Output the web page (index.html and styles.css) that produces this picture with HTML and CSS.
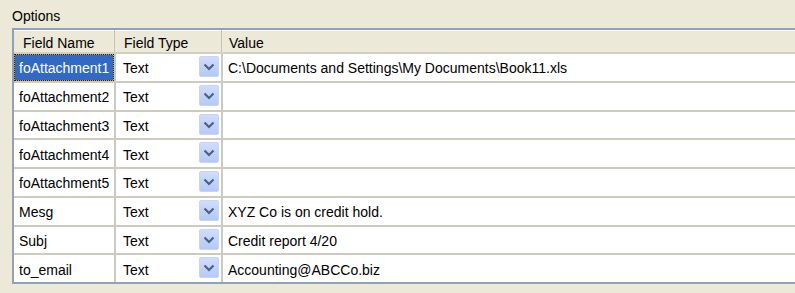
FILE: index.html
```html
<!DOCTYPE html>
<html>
<head>
<meta charset="utf-8">
<link rel="stylesheet" href="styles.css">
</head>
<body>
<div class="panel">
  <div class="title">Options</div>
  <div class="grid">
    <div class="hrow">
      <div class="hcell c1">Field Name</div>
      <div class="hcell c2">Field Type</div>
      <div class="hcell c3">Value</div>
    </div>
    <div class="row">
      <div class="cell c1 focus"><span class="sel">foAttachment1</span></div>
      <div class="cell c2"><span class="type">Text</span><span class="btn"><svg width="20" height="21" viewBox="0 0 20 21"><path d="M5.5 8.5 L10 13 L14.5 8.5" fill="none" stroke="#4d6185" stroke-width="2.2"/></svg></span></div>
      <div class="cell c3">C:\Documents and Settings\My Documents\Book11.xls</div>
    </div>
    <div class="row">
      <div class="cell c1">foAttachment2</div>
      <div class="cell c2"><span class="type">Text</span><span class="btn"><svg width="20" height="21" viewBox="0 0 20 21"><path d="M5.5 8.5 L10 13 L14.5 8.5" fill="none" stroke="#4d6185" stroke-width="2.2"/></svg></span></div>
      <div class="cell c3"></div>
    </div>
    <div class="row">
      <div class="cell c1">foAttachment3</div>
      <div class="cell c2"><span class="type">Text</span><span class="btn"><svg width="20" height="21" viewBox="0 0 20 21"><path d="M5.5 8.5 L10 13 L14.5 8.5" fill="none" stroke="#4d6185" stroke-width="2.2"/></svg></span></div>
      <div class="cell c3"></div>
    </div>
    <div class="row">
      <div class="cell c1">foAttachment4</div>
      <div class="cell c2"><span class="type">Text</span><span class="btn"><svg width="20" height="21" viewBox="0 0 20 21"><path d="M5.5 8.5 L10 13 L14.5 8.5" fill="none" stroke="#4d6185" stroke-width="2.2"/></svg></span></div>
      <div class="cell c3"></div>
    </div>
    <div class="row">
      <div class="cell c1">foAttachment5</div>
      <div class="cell c2"><span class="type">Text</span><span class="btn"><svg width="20" height="21" viewBox="0 0 20 21"><path d="M5.5 8.5 L10 13 L14.5 8.5" fill="none" stroke="#4d6185" stroke-width="2.2"/></svg></span></div>
      <div class="cell c3"></div>
    </div>
    <div class="row">
      <div class="cell c1">Mesg</div>
      <div class="cell c2"><span class="type">Text</span><span class="btn"><svg width="20" height="21" viewBox="0 0 20 21"><path d="M5.5 8.5 L10 13 L14.5 8.5" fill="none" stroke="#4d6185" stroke-width="2.2"/></svg></span></div>
      <div class="cell c3">XYZ Co is on credit hold.</div>
    </div>
    <div class="row">
      <div class="cell c1">Subj</div>
      <div class="cell c2"><span class="type">Text</span><span class="btn"><svg width="20" height="21" viewBox="0 0 20 21"><path d="M5.5 8.5 L10 13 L14.5 8.5" fill="none" stroke="#4d6185" stroke-width="2.2"/></svg></span></div>
      <div class="cell c3">Credit report 4/20</div>
    </div>
    <div class="row last">
      <div class="cell c1">to_email</div>
      <div class="cell c2"><span class="type">Text</span><span class="btn"><svg width="20" height="21" viewBox="0 0 20 21"><path d="M5.5 8.5 L10 13 L14.5 8.5" fill="none" stroke="#4d6185" stroke-width="2.2"/></svg></span></div>
      <div class="cell c3">Accounting@ABCCo.biz</div>
    </div>
  </div>
</div>
</body>
</html>
```

FILE: styles.css
```css
html, body {
  margin: 0;
  padding: 0;
  background: #ece9d8;
  overflow: hidden;
}
body {
  width: 795px;
  height: 293px;
  font-family: "Liberation Sans", Arial, sans-serif;
  font-size: 14px;
  color: #000;
}
.panel {
  padding: 8px 0 0 12px;
}
.title {
  line-height: 16px;
  height: 16px;
  margin-bottom: 4px;
}
.grid {
  width: 800px;
  border: 2px solid #8ea3ba;
  border-right: none;
  background: #fff;
}
.hrow {
  display: flex;
  height: 22px;
  background: #ece9d8;
  border-bottom: 2px solid #d3d0c0;
  box-shadow: inset 0 1px 0 #fff;
}
.hcell {
  box-sizing: border-box;
  line-height: 16px;
  padding-top: 5px;
}
.hcell.c1, .hcell.c2 {
  border-right: 1px solid #c7c4b3;
}
.hcell.c1 { width: 101px; padding-left: 9px; }
.hcell.c2 { width: 107px; padding-left: 9px; }
.hcell.c3 { flex: 1; padding-left: 7px; }
.row {
  display: flex;
  height: 28.75px;
  box-sizing: border-box;
  border-bottom: 2px solid #cdcabe;
}
.row.last {
  border-bottom: none;
  height: 27px;
}
.cell {
  box-sizing: border-box;
  display: flex;
  align-items: center;
  line-height: 16px;
  white-space: nowrap;
  padding-top: 2px;
}
.cell.c1 {
  width: 102px;
  padding-left: 5px;
  border-right: 2px solid #cdcabe;
}
.cell.c2 {
  width: 107px;
  padding-left: 7px;
  padding-top: 0;
  border-right: 2px solid #cdcabe;
  align-items: flex-start;
}
.cell.c3 {
  flex: 1;
  padding-left: 5px;
}
.type {
  flex: 1;
  align-self: center;
  padding-top: 2px;
}
.btn {
  box-sizing: border-box;
  width: 20px;
  height: 21px;
  margin-top: 2px;
  margin-right: 2px;
  border: 1px solid #c5d4fa;
  border-radius: 2px;
  background: linear-gradient(#d0dcfc, #b5c9f6);
  display: flex;
}
.btn svg {
  display: block;
  margin: -1px;
}
.cell.focus {
  padding: 0;
  background: #cfa244;
}
.sel {
  box-sizing: border-box;
  width: 100%;
  height: 100%;
  background: #316ac5;
  background-clip: padding-box;
  border: 1px dotted #2a1e08;
  color: #fff;
  display: flex;
  align-items: center;
  padding: 2px 0 0 4px;
}
```
